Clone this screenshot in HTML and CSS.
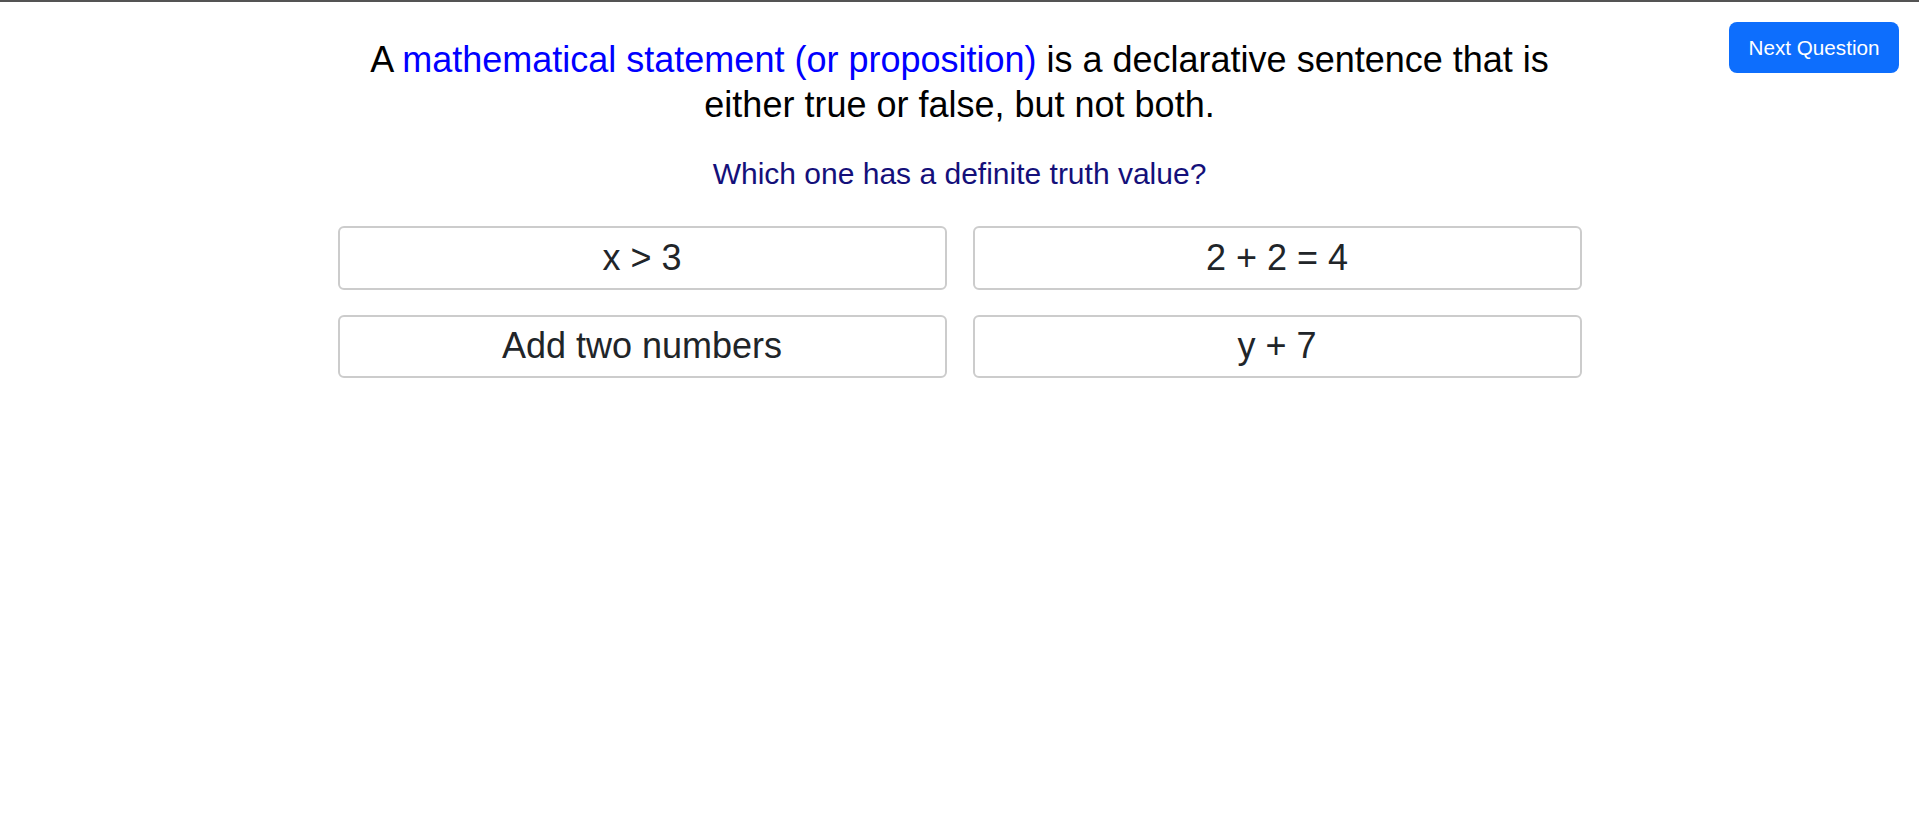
FILE: index.html
```html
<!DOCTYPE html>
<html lang="en">
<head>
<meta charset="utf-8">
<title>Quiz</title>
<link rel="stylesheet" href="styles.css">
</head>
<body>
<div class="topline"></div>
<button class="next-btn" type="button">Next Question</button>
<main class="quiz">
  <h1 class="statement">A <span class="term">mathematical statement (or proposition)</span> is a declarative sentence that is either true or false, but not both.</h1>
  <p class="question">Which one has a definite truth value?</p>
  <div class="options">
    <button class="option" type="button">x &gt; 3</button>
    <button class="option" type="button">2 + 2 = 4</button>
    <button class="option" type="button">Add two numbers</button>
    <button class="option" type="button">y + 7</button>
  </div>
</main>
</body>
</html>
```

FILE: styles.css
```css
html, body {
  margin: 0;
  padding: 0;
  background: #ffffff;
}

body {
  font-family: "Liberation Sans", Arial, sans-serif;
  color: #000000;
  position: relative;
  min-height: 826px;
}

.topline {
  height: 2px;
  background: #545454;
}

.next-btn {
  position: absolute;
  top: 22px;
  right: 20px;
  width: 170px;
  height: 51px;
  display: inline-flex;
  align-items: center;
  justify-content: center;
  padding: 0;
  border: none;
  border-radius: 8px;
  background: #0d6efd;
  color: #ffffff;
  font-family: "Liberation Sans", Arial, sans-serif;
  font-size: 20.7px;
  cursor: pointer;
}

.quiz {
  width: 1244px;
  margin: 0 auto;
  padding-top: 35px;
  text-align: center;
}

.statement {
  margin: 0;
  font-size: 36px;
  font-weight: normal;
  line-height: 45px;
  color: #000000;
}

.term {
  color: #0000ff;
}

.question {
  margin: 30px 0 0;
  font-size: 30px;
  line-height: 34.5px;
  color: #14107a;
}

.options {
  margin-top: 34.5px;
  display: grid;
  grid-template-columns: 1fr 1fr;
  column-gap: 26px;
  row-gap: 25px;
}

.option {
  height: 63.5px;
  padding: 0;
  background: #ffffff;
  border: 2px solid #cccccc;
  border-radius: 6px;
  font-family: "Liberation Sans", Arial, sans-serif;
  font-size: 36px;
  color: #212529;
  cursor: pointer;
}
```
